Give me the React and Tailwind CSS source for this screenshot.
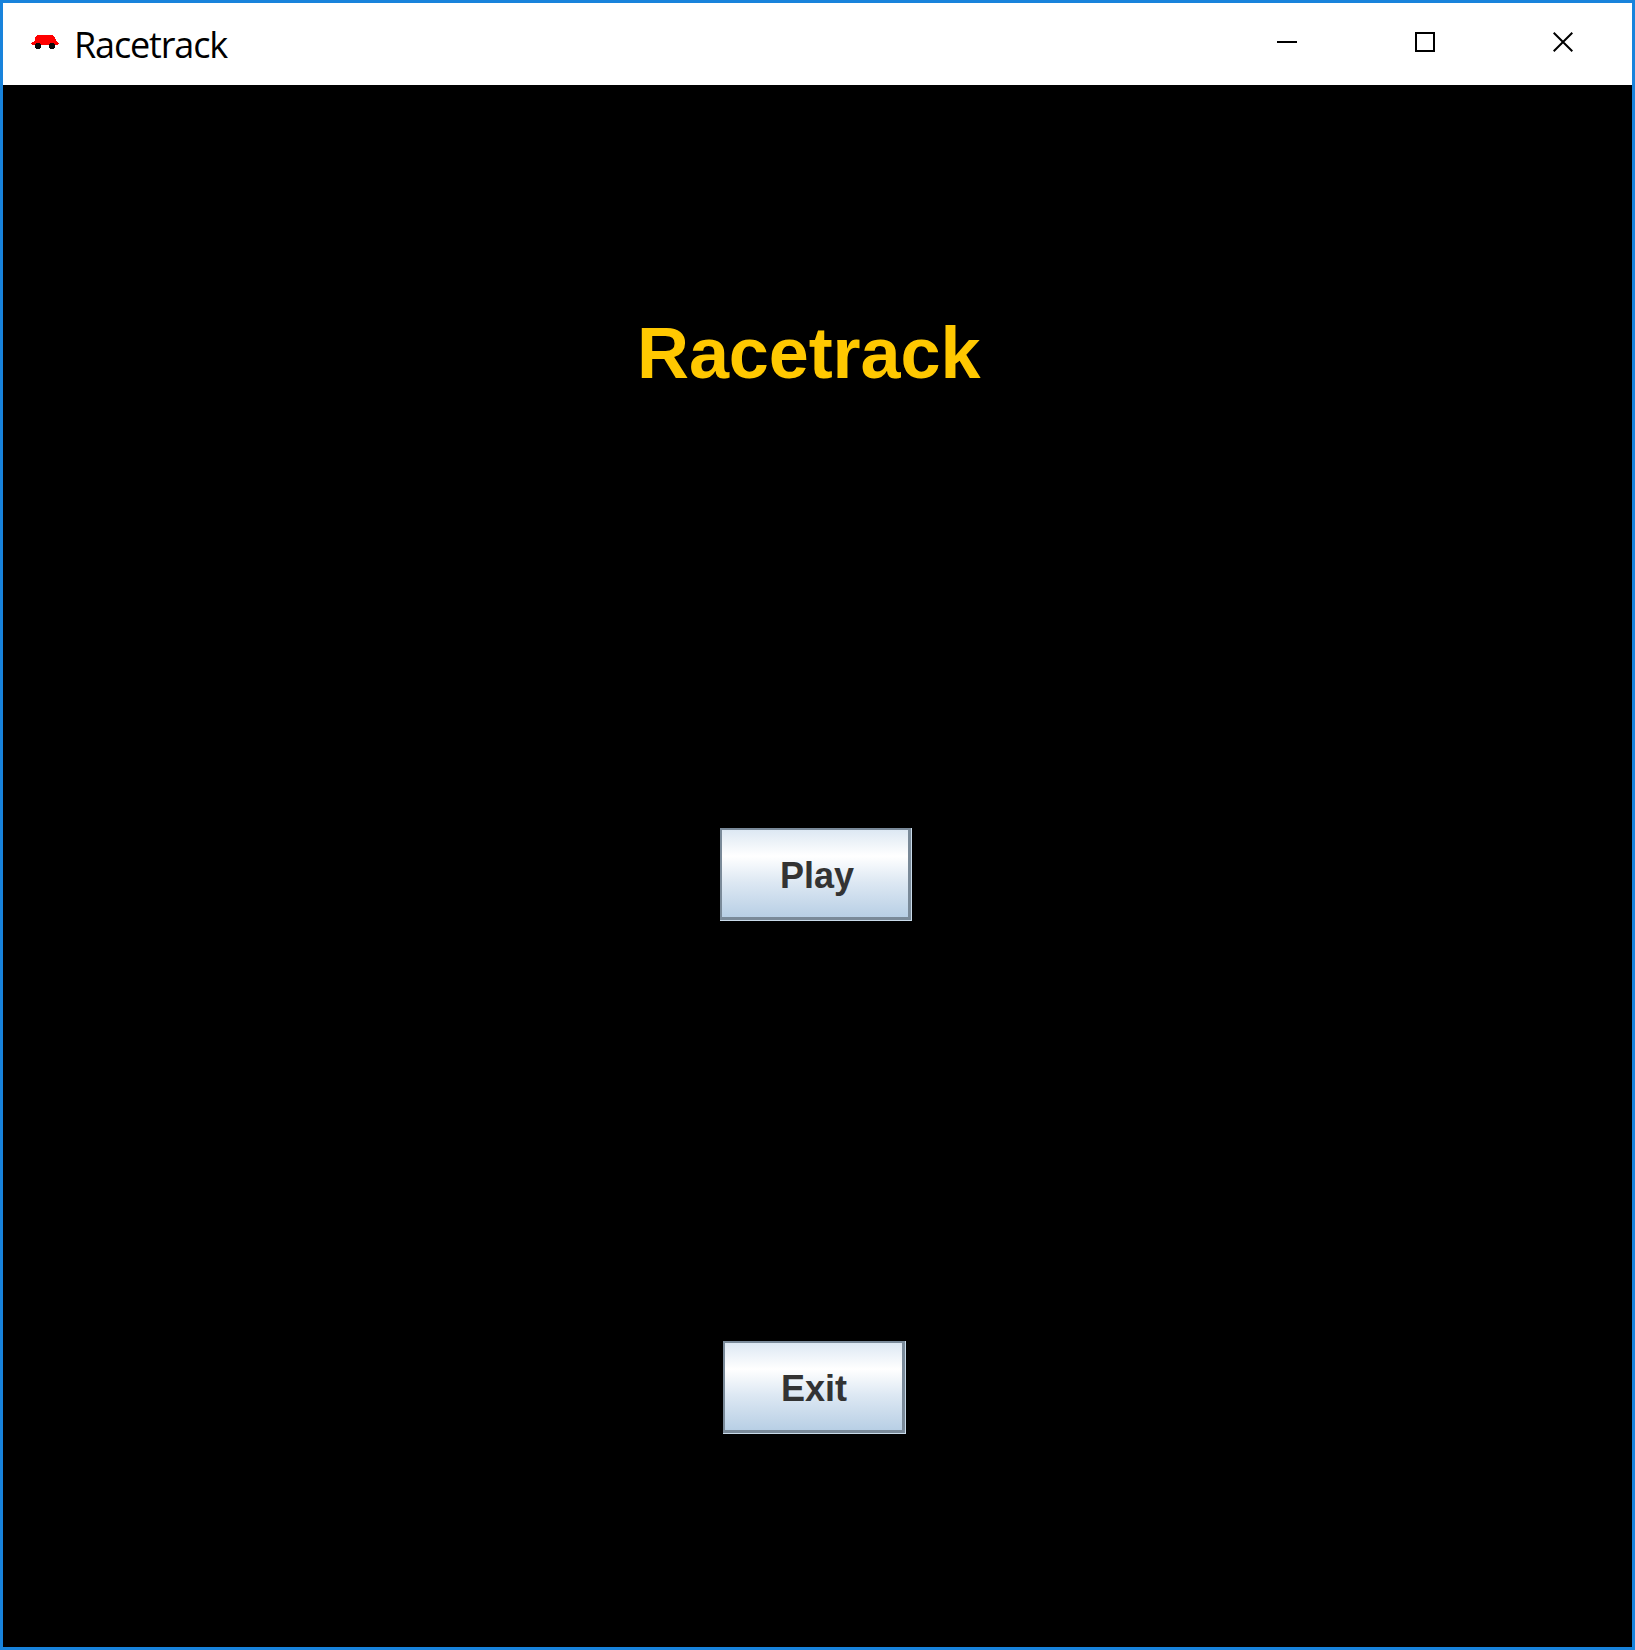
const METAL_FACE =
  "bg-[linear-gradient(180deg,#dde8f3_0%,#ffffff_30%,#dde8f3_60%,#b8cfe5_100%)]";

function CarIcon() {
  return (
    <svg className="h-[14px] w-[28px] shrink-0" viewBox="0 0 28 14" shapeRendering="crispEdges">
      <path
        fill="#ff0000"
        d="M6 0H22V1H23V2H24V4H25V6H26V7H27V8H28V9H27V10H1V9H0V8H1V7H3V6H4V4H4V2H5V1H6Z"
      />
      <path fill="#0a0a0a" d="M5 8h4v1h1v4H9v1H5v-1H4V9h1z" />
      <path fill="#0a0a0a" d="M19 8h4v1h1v4h-1v1h-4v-1h-1V9h1z" />
    </svg>
  );
}

function CaptionButton({ label, children }) {
  return (
    <button aria-label={label} className="flex h-[78px] w-[138px] items-center justify-center">
      <svg className="size-5" viewBox="0 0 20 20" fill="none" stroke="#000000" strokeWidth="2">
        {children}
      </svg>
    </button>
  );
}

function TitleBar() {
  return (
    <header className="flex h-[82px] shrink-0 bg-white">
      <div className="flex h-[78px] grow items-center pl-7">
        <CarIcon />
        <span className="ml-[15px] mt-[5px] font-['Open_Sans',sans-serif] text-[36px] leading-none tracking-[-1.15px] text-black">
          Racetrack
        </span>
      </div>
      <div className="flex">
        <CaptionButton label="Minimize">
          <path d="M0 10h20" />
        </CaptionButton>
        <CaptionButton label="Maximize">
          <path d="M1 1h18v18H1z" />
        </CaptionButton>
        <CaptionButton label="Close">
          <path d="M.7 .7l18.6 18.6M19.3 .7L.7 19.3" />
        </CaptionButton>
      </div>
    </header>
  );
}

function MetalButton({ className, children }) {
  return (
    <button className={`h-[93px] border-r border-b border-[#c9dbea] ${className}`}>
      <span
        className={`flex h-full items-center border-2 border-r-[3px] border-b-[3px] border-[#7a8a99] pt-[5px] text-[36px] leading-none font-bold text-[#333333] ${METAL_FACE}`}
      >
        {children}
      </span>
    </button>
  );
}

export default function App() {
  return (
    <div className="flex h-[1650px] w-[1635px] flex-col overflow-hidden border-[3px] border-[#1883dc] bg-black font-['Liberation_Sans',Arial,sans-serif]">
      <TitleBar />
      <main className="flex grow flex-col items-start bg-black">
        <h1 className="mt-[232px] ml-[634px] text-[72px] leading-[72px] font-bold tracking-[-0.1px] text-[#ffc800]">
          Racetrack
        </h1>
        <MetalButton className="mt-[439px] ml-[717px] w-[192px] [&>span]:pl-[58px]">Play</MetalButton>
        <MetalButton className="mt-[420px] ml-[720px] w-[183px] [&>span]:pl-[56px]">Exit</MetalButton>
      </main>
    </div>
  );
}
